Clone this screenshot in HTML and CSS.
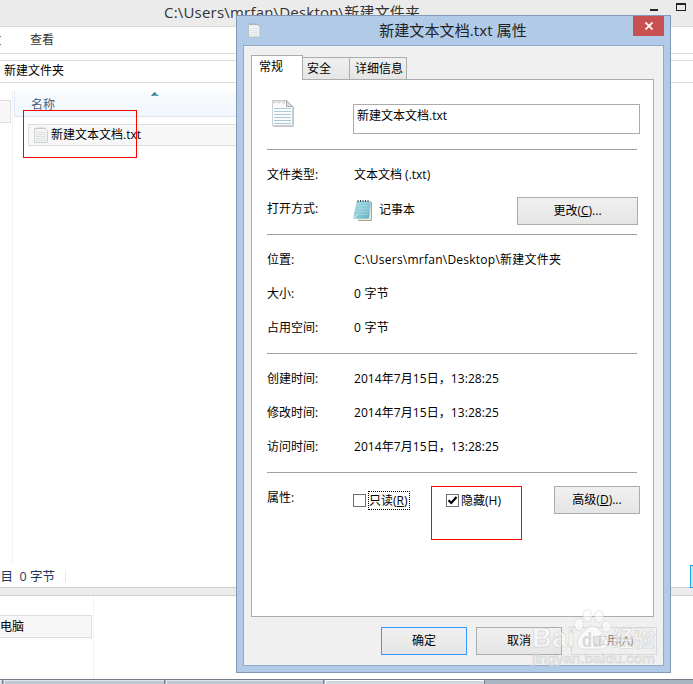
FILE: index.html
```html
<!DOCTYPE html>
<html lang="zh-CN">
<head>
<meta charset="utf-8">
<title>新建文本文档.txt 属性</title>
<link rel="stylesheet" href="styles.css">
</head>
<body>
<div class="desktop">
  <main class="explorer">
    <header class="explorer-title">
      <span>C:\Users\mrfan\Desktop\新建文件夹</span>
      <svg class="win-controls" width="36" height="9" viewBox="0 0 36 9"><path d="M0 7h8v2H0z" fill="#222"/><path d="M26 1h10v8H26zM27 3v5h8V3z" fill="#222" fill-rule="evenodd"/></svg>
    </header>
    <nav class="menu"><i class="menu-cut"></i><span>查看</span></nav>
    <div class="address">新建文件夹</div>
    <div class="browser">
      <aside class="side"><div class="side-item"></div></aside>
      <section class="files">
        <div class="column-head"><span>名称</span><svg class="sort" width="8" height="4" viewBox="0 0 8 4"><path d="M0 4L4 0l4 4z" fill="#5fa0c0"/><path d="M0 4L4 0v2z" fill="#245a78"/></svg></div>
        <div class="file">
          <svg width="14" height="16" viewBox="0 0 14 16"><path d="M.5 1.500h11l2 2v12H.5z" fill="#f4f4f2" stroke="#d0d0d0"/><path d="M2 1h9" stroke="#aaa" stroke-dasharray="1 1"/><path d="M2 5.500h10M2 7.500h10M2 9.500h10M2 11.500h10M2 13.500h10" stroke="#d9e3e6"/></svg>
          <span>新建文本文档.txt</span>
        </div>
      </section>
    </div>
    <footer class="status"><span class="status-text">项目&nbsp; 0 字节</span><i></i></footer>
  </main>
  <div class="second">
    <aside class="second-side"><div class="computer">电脑</div></aside>
  </div>
  <div class="taskbar"><i class="t1"></i><i class="t2"></i><i class="t3"></i><i class="t4"></i></div>
  <div class="accent-edge"></div>
  <div class="mark mark-file"></div>

  <section class="dialog">
    <header class="dialog-title">
      <svg class="title-icon" width="13" height="15" viewBox="0 0 13 15"><path d="M.5 1.500h9l2.500 2.500v10H.5z" fill="#edf2f3" stroke="#b7bfc2"/><path d="M1 1h9" stroke="#8c9699" stroke-dasharray="1 1"/><path d="M2 5.500h8M2 7.500h8M2 9.500h8M2 11.500h8" stroke="#e0e9ec"/></svg>
      <span>新建文本文档.txt 属性</span>
      <button class="close" aria-label="关闭"><svg width="8" height="8" viewBox="0 0 8 8"><path d="M.5.5l7 7M7.500.5l-7 7" stroke="#fff" stroke-width="1.700"/></svg></button>
    </header>
    <div class="client">
      <div class="tabs"><div class="tab active">常规</div><div class="tab security">安全</div><div class="tab details">详细信息</div></div>
      <div class="panel">
        <div class="identity">
          <svg class="doc-icon" width="24" height="29" viewBox="0 0 24 29">
            <path d="M22.500 8v19.500H2" stroke="#c4c4c4" fill="none"/>
            <path d="M1.500 1.500h14l6 6v19h-20z" fill="#fafafa" stroke="#cfcfcf"/>
            <path d="M15.500 1.500v6h6z" fill="#dedede" stroke="#9c9c9c" stroke-width=".8"/>
            <path d="M3.500 1.500a1.200 1.200 0 1 0 .1 0M8 1.500a1.200 1.200 0 1 0 .1 0M12.500 1.500a1.200 1.200 0 1 0 .1 0" fill="#fff" stroke="#a0a0a0" stroke-width=".7"/>
            <path d="M3 9.500h17M3 12.500h17M3 15.500h17M3 18.500h17M3 21.500h17M3 24.500h17" stroke="#a9cadb"/>
          </svg>
          <div class="name-box">新建文本文档.txt</div>
        </div>
        <div class="group">
          <div class="row"><span>文件类型:</span><span>文本文档 (.txt)</span></div>
          <div class="row"><span>打开方式:</span>
            <span class="app"><svg width="20" height="22" viewBox="0 0 20 22"><defs><linearGradient id="pad" x1="0" y1="0" x2="1" y2="1"><stop offset="0" stop-color="#a8dce8"/><stop offset=".5" stop-color="#8ccbd9"/><stop offset="1" stop-color="#62adbf"/></linearGradient></defs><path d="M5 21.300h13.300V3" fill="#fff" stroke="#9b8c68"/><path d="M4 2.500h13.500L16 19.500H.5z" fill="url(#pad)" stroke="#8dc0cc" stroke-width=".6"/><path d="M.5 19l5-5-3.500 5.500z" fill="#d8f1f5"/><path d="M4 6.500h12M4 9.500h12M3 12.500h12M3 15.500h12" stroke="#a6d9e3" stroke-width=".6"/><path d="M5 1v2M7.500 1v2M10 1v2M12.500 1v2M15 1v2" stroke="#334e56"/></svg>记事本</span>
            <button class="button change">更改(<u>C</u>)...</button></div>
        </div>
        <div class="group">
          <div class="row"><span>位置:</span><span class="path">C:\Users\mrfan\Desktop\新建文件夹</span></div>
          <div class="row"><span>大小:</span><span class="path">0 字节</span></div>
          <div class="row"><span>占用空间:</span><span class="path">0 字节</span></div>
        </div>
        <div class="group">
          <div class="row"><span>创建时间:</span><span class="time">2014年7月15日<b>，</b>13:28:25</span></div>
          <div class="row"><span>修改时间:</span><span class="time">2014年7月15日<b>，</b>13:28:25</span></div>
          <div class="row"><span>访问时间:</span><span class="time">2014年7月15日<b>，</b>13:28:25</span></div>
        </div>
        <div class="group attributes">
          <span class="attr-label">属性:</span>
          <div class="check"><i class="box"></i><span class="focus">只读(<u>R</u>)</span></div>
          <div class="check hidden-check"><i class="box"><svg width="11" height="11" viewBox="0 0 11 11"><path d="M1.500 5.200L4.300 8 9.500 2" fill="none" stroke="#000" stroke-width="2.200"/></svg></i><span>隐藏(H)</span></div>
          <button class="button advanced">高级(<u>D</u>)...</button>
        </div>
      </div>
      <div class="actions"><button class="button ok">确定</button><button class="button">取消</button><button class="button apply">应用(A)</button></div>
    </div>
  </section>
  <div class="mark mark-hidden"></div>
  <svg class="watermark" width="132" height="64" viewBox="0 0 132 64">
    <g fill="#fff" fill-opacity=".6" stroke="#c8c8c8" stroke-opacity=".6" stroke-width=".8">
      <text class="wm-brand" x="4" y="41" textLength="43" lengthAdjust="spacingAndGlyphs">Bai</text>
      <ellipse cx="51" cy="18.500" rx="4.500" ry="6"/><ellipse cx="59.500" cy="9.500" rx="4.500" ry="6"/><ellipse cx="71" cy="10.500" rx="4.500" ry="6"/><ellipse cx="78.500" cy="20.500" rx="4.500" ry="5.500"/>
      <path d="M64 20c-5 0-7 5-11 9-6 6-4 14 3 14h17c8 0 9-8 3-14-4-4-6-9-12-9z"/>
      <text class="wm-cn" x="84" y="40" textLength="43" lengthAdjust="spacingAndGlyphs">经验</text>
      <text class="wm-url" x="4" y="57" textLength="123" lengthAdjust="spacingAndGlyphs">jingyan.baidu.com</text>
    </g>
    <text class="wm-du" x="54" y="41" textLength="20" lengthAdjust="spacingAndGlyphs">du</text>
  </svg>
</div>
</body>
</html>
```
FILE: styles.css
```css
* { box-sizing: border-box; }
body { margin: 0; font: 12px/16px "Open Sans", "Noto Sans CJK SC", sans-serif; color: #000; }
svg { display: block; flex: none; }
button { font: inherit; color: inherit; }
u { text-underline-offset: 1px; text-decoration-skip-ink: none; }
.desktop { position: relative; width: 693px; height: 684px; overflow: hidden; background: #fff; white-space: nowrap; }

.explorer { height: 596px; display: flex; flex-direction: column; border-bottom: 1px solid #cfcfcf; }
.explorer-title { height: 27px; flex: none; background: #ebebeb; border-bottom: 1px solid #d9d9d9; padding: 1px 7px 0 164px; display: flex; justify-content: space-between; align-items: flex-start; font-size: 15px; line-height: 22px; letter-spacing: .2px; color: #333; }
.win-controls { margin: 1px 0 0; }
.menu { height: 27px; flex: none; border-bottom: 1px solid #d9d9d9; display: flex; align-items: center; color: #333; gap: 29px; }
.menu-cut { width: 1px; height: 9px; border-top: 1px solid #4779a8; border-bottom: 1px solid #4779a8; }
.address { height: 23px; flex: none; margin-top: 6px; border: solid #d9d9d9; border-width: 1px 0; padding: 2px 4px; }
.browser { height: 482px; flex: none; display: flex; padding-top: 8px; }
.side { width: 13px; border-right: 1px solid #f2f2f2; padding-top: 9px; }
.side-item { width: 11px; height: 23px; background: #f7f7f7; border: 1px solid #dedede; border-left: 0; }
.files { width: 400px; }
.column-head { position: relative; height: 26px; margin-left: 1px; border-left: 1px solid #dce9f4; border-bottom: 1px solid #dbe6f1; background: linear-gradient(#fafcfe, #f0f6fc); padding: 6px 16px; color: #4c607a; }
.sort { position: absolute; left: 136px; top: 1px; }
.file { margin: 7px 0 0 15px; height: 22px; border: 1px solid #dedede; background: #f7f7f7; display: flex; align-items: center; padding-left: 5px; gap: 4px; }
.file span { margin-left: -1px; }
.status { flex: 1; display: flex; align-items: center; gap: 10px; color: #1e395b; border-bottom: 7px solid #ebebeb; box-shadow: inset 0 -1px #cfcfcf; }
.status-text { margin-left: -12px; font-size: 12.500px; }
.status i { width: 1px; height: 11px; background: #e5e5e5; }
.second { height: 83px; }
.second-side { width: 94px; height: 100%; padding-top: 19px; border-right: 1px solid #f3f3f3; }
.computer { width: 92px; height: 23px; border: 1px solid #dedede; border-left: 0; background: #f7f7f7; line-height: 22px; }
.taskbar { height: 5px; border-top: 1px solid #737c86; background: #aab5c2; display: flex; gap: 2px; }
.taskbar i { background: #bfc8d2; border: solid #e1e6eb; border-width: 1px 0 0 1px; box-shadow: 1px 0 #7c8590; }
.t1 { width: 2px; } .t2 { width: 160px; } .t3 { width: 157px; }
.taskbar .t4 { width: 159px; background: #d0d7df; border-color: #fff; }
.accent-edge { position: absolute; right: 0; top: 565px; width: 3px; height: 23px; background: #c7eafa; border: 1px solid #1e9cdb; border-right: 0; }
.mark { position: absolute; border: 1px solid #f00; }
.mark-file { left: 23px; top: 110px; width: 114px; height: 48px; }
.mark-hidden { left: 431px; top: 486px; width: 91px; height: 54px; }

.dialog { position: absolute; left: 236px; top: 15px; width: 435px; height: 658px; border: 1px solid #8299b5; background: #b0cae7; padding: 0 6px 6px; }
.dialog-title { height: 29px; display: flex; align-items: flex-start; justify-content: space-between; font-size: 15px; line-height: 29px; color: #222; }
.title-icon { margin: 7px 0 0 5px; }
.close { width: 31px; height: 20px; padding: 0; border: 0; background: #c75050; display: grid; place-items: center; }
.dialog-title > span { margin-left: 12px; letter-spacing: .1px; }
.client { height: 621px; background: #f0f0f0; border: 1px solid #90aac8; padding: 9px 9px 0 7px; }
.tabs { display: flex; align-items: flex-end; height: 24px; }
.tab { height: 22px; border: 1px solid #acacac; border-left: 0; border-bottom: 0; background: linear-gradient(#f0f0f0, #e5e5e5); padding: 3px 0 0 4px; }
.tab.active { position: relative; width: 52px; height: 25px; margin-bottom: -1px; border-left: 1px solid #acacac; background: #fff; padding: 3px 0 0 7px; }
.security { width: 47px; }
.details { width: 57px; padding-left: 5px; }
.panel { width: 403px; height: 538px; background: #fff; border: 1px solid #acacac; padding: 0 13px 0 15px; }
.identity { height: 69px; display: flex; padding: 20px 0 0 4px; }
.doc-icon { margin-right: 58px; margin-top: -1px; }
.name-box { margin-top: 4px; width: 287px; height: 30px; flex: none; border: 1px solid #ababab; padding: 3px; }
.group { position: relative; width: 371px; height: 119px; padding-top: 9px; }
.group::before { content: ""; position: absolute; left: 0; top: 0; width: 370px; height: 1px; background: #a0a0a0; }
.identity + .group { height: 85px; }
.row { height: 34px; display: grid; grid-template-columns: 87px 150px 1fr; align-items: center; }
.app { display: flex; align-items: center; gap: 6px; margin-left: -1px; padding-top: 1px; }
.path { letter-spacing: .24px; }
.time { letter-spacing: .07px; }
.time b { font: 12px/12px "Noto Sans CJK TC", sans-serif; }
.button { height: 28px; width: 86px; padding: 0; border: 1px solid #acacac; background: linear-gradient(#f0f0f0, #e5e5e5); text-align: center; }
.change { width: 121px; justify-self: end; margin-top: 4px; }
.attributes { width: 373px; display: flex; align-items: flex-start; padding-top: 14px; }
.attr-label { width: 86px; margin-top: 4px; }
.check { display: flex; align-items: center; height: 20px; margin-top: 4px; gap: 2px; }
.box { width: 13px; height: 13px; flex: none; border: 1px solid #707070; background: #fff; }
.focus { width: 42px; height: 19px; border: 1px dotted #000; line-height: 17px; }
.hidden-check { margin-left: 36px; }
.hidden-check span { padding-top: 1px; }
.advanced { margin-left: auto; }
.actions { display: flex; gap: 9px; margin: 10px -2px 0 130px; }
.ok { border-color: #3399ff; }
.actions .button { flex: none; }
.apply { color: #838383; border-color: #d9d9d9; background: #efefef; }
.watermark { position: absolute; left: 528px; top: 606px; }
.wm-brand { font: bold 28px "Liberation Sans", sans-serif; }
.wm-cn { font: bold 22px "Noto Sans CJK SC", sans-serif; }
.wm-url { font: 13px "Liberation Sans", sans-serif; }
.wm-du { font: bold 20px "Liberation Sans", sans-serif; fill: #b8b8b8; fill-opacity: .5; }
```
